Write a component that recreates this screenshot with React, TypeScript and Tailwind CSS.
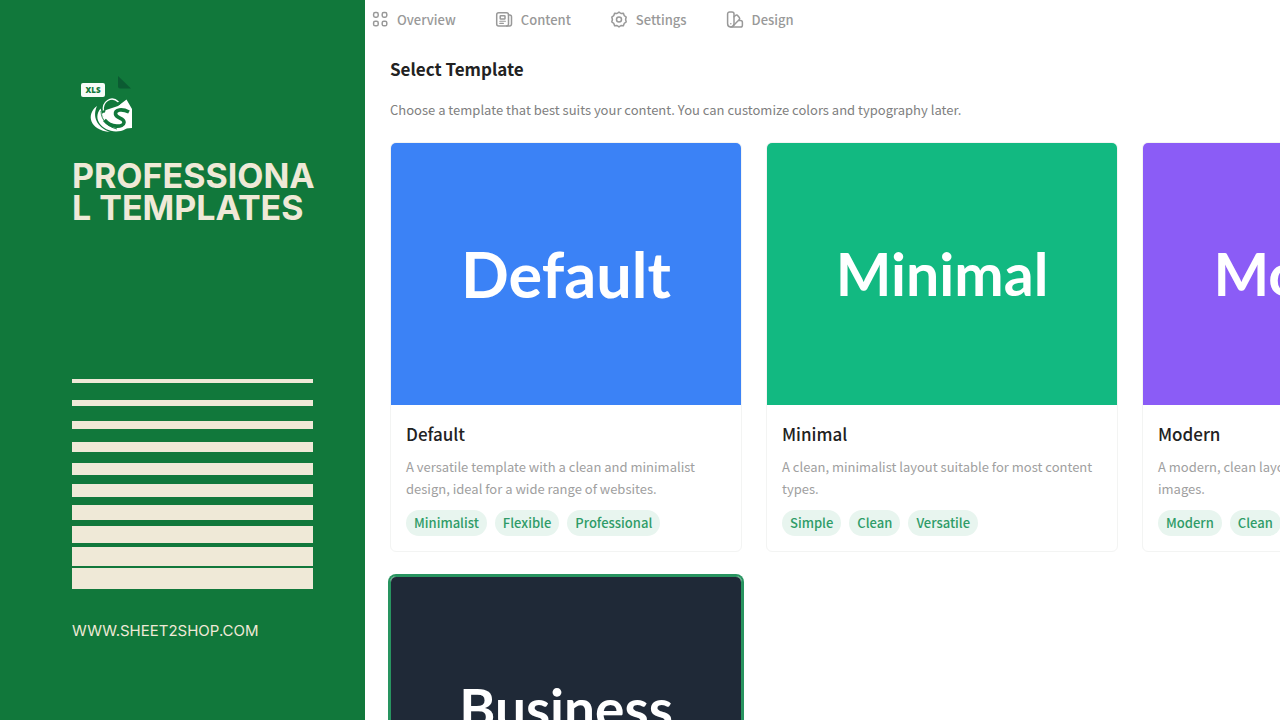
import React from 'react'

type Template = {
    name: string
    description: string
    tags: string[]
    preview: string
    selected?: boolean
}

const templates: Template[] = [
    {
        name: 'Default',
        description: 'A versatile template with a clean and minimalist design, ideal for a wide range of websites.',
        tags: ['Minimalist', 'Flexible', 'Professional'],
        preview: 'bg-[#3b82f6] text-[63px]',
    },
    {
        name: 'Minimal',
        description: 'A clean, minimalist layout suitable for most content types.',
        tags: ['Simple', 'Clean', 'Versatile'],
        preview: 'bg-[#12b981] text-[59px]',
    },
    {
        name: 'Modern',
        description: 'A modern, clean layout with big typography and images.',
        tags: ['Modern', 'Clean', 'Typography'],
        preview: 'bg-[#8b5cf6] text-[59px]',
    },
    {
        name: 'Business',
        description: 'A professional template for companies and services.',
        tags: ['Business', 'Professional'],
        preview: 'bg-[#1f2937] text-[55px]',
        selected: true,
    },
]

const bars = ['h-[4px]', 'h-[6px]', 'h-[8px]', 'h-[10px]', 'h-[12px]', 'h-[13px]', 'h-[15px]', 'h-[17px]', 'h-[19px]', 'h-[21px]']

const Icon = ({ children }: { children: React.ReactNode }) => (
    <svg className="size-[18px]" viewBox="0 0 18 18" fill="none" stroke="currentColor" strokeWidth="1.5" strokeLinecap="round" strokeLinejoin="round" aria-hidden="true">
        {children}
    </svg>
)

const navItems = [
    {
        label: 'Overview',
        icon: (
            <Icon>
                <rect x="2.6" y="1.6" width="4.6" height="4.6" rx="1.6" />
                <rect x="11.2" y="1.6" width="4.6" height="4.6" rx="1.6" />
                <rect x="2.6" y="10.2" width="4.6" height="4.6" rx="1.6" />
                <rect x="11.2" y="10.2" width="4.6" height="4.6" rx="1.6" />
            </Icon>
        ),
    },
    {
        label: 'Content',
        icon: (
            <Icon>
                <rect x="1.7" y="1.7" width="11.8" height="13.2" rx="2" />
                <path d="M13.5 3.9h1.2a1.8 1.8 0 0 1 1.8 1.8v7.4a1.8 1.8 0 0 1-1.8 1.8h-3" />
                <rect x="5.2" y="4.700" width="4.8" height="3.4" rx=".6" />
                <path d="M4.8 10.3h5.6M4.8 12.4h3.6" strokeWidth="1.1" />
            </Icon>
        ),
    },
    {
        label: 'Settings',
        icon: (
            <Icon>
                <path d="M9 1.100 11 2.500l2.400-.2.8 2.300 2 1.400-.6 2.500.6 2.500-2 1.400-.8 2.300-2.400-.2L9 15.900 7 14.500l-2.400.2-.8-2.300-2-1.400.6-2.500L1.800 6l2-1.400.8-2.300 2.400.2Z" />
                <circle cx="9" cy="8.5" r="2.500" />
            </Icon>
        ),
    },
    {
        label: 'Design',
        icon: (
            <Icon>
                <path d="M1.600 3a2 2 0 0 1 2-2h2.400a2 2 0 0 1 2 2v9.800a3.200 3.200 0 0 1-6.400 0Z" />
                <path d="m8 5.800 1.500-1.300a1.600 1.600 0 0 1 2.300.2l1.500 1.800a1.600 1.600 0 0 1-.2 2.200L6.800 15.200" />
                <path d="M12.800 9.600h1.800a1.800 1.800 0 0 1 1.800 1.800v2.800a1.800 1.800 0 0 1-1.800 1.800H4.800" />
                <path d="M4.800 12.800h.01" />
            </Icon>
        ),
    },
]

const Logo = () => (
    <svg className="h-[60px] w-[60px]" viewBox="0 0 60 60" role="img" aria-label="Sheet2Shop">
        <path d="M46 3v10.500a2 2 0 0 0 2 2h11Z" fill="#0b5b32" />
        <rect x="9" y="10" width="24" height="14" rx="2" fill="#f7fcf8" />
        <text x="21" y="20" textAnchor="middle" fontSize="8" fontWeight="800" fill="#11783b" fontFamily="Open Sans, sans-serif">XLS</text>
        {/* shopping tag */}
        <path d="M30 41 34 37 46 33 54.500 26.500 60 36V55L48 56 34 50Z" fill="#fff" />
        <path d="M31.500 38C30 29 39 22 46.500 29" fill="none" stroke="#fff" strokeWidth="1.300" />
        {/* swooshes */}
        <path d="M25 33C14 41 17 57 38 59 25 54 20 44 25 33Z" fill="#fff" />
        <path d="M28.500 35.500C20 46 30 58 44 58.500 51 58.500 57 55 58 50L44 51Q35 50 31 43Z" fill="#fff" />
        <path d="M57 39C50 35.500 43 36.500 43.500 41c.5 4.500 9 4 8.500 8.500-.5 5-13 5.500-19.500-2.500" fill="none" stroke="#11783b" strokeWidth="3.600" />
        <path d="M29 38c0 9 7 16 16 18" fill="none" stroke="#11783b" strokeWidth=".9" />
        <circle cx="32" cy="38.500" r="1.200" fill="#11783b" />
        <circle cx="47" cy="30.500" r="1.200" fill="#11783b" />
    </svg>
)

const TemplateCard = ({ template }: { template: Template }) => (
    <article className={template.selected ? 'rounded-md border border-[#289460] ring-2 ring-[#289460]' : 'rounded-md border border-[#f3f4f3]'}>
        <div className={`flex h-[262px] items-center justify-center rounded-t-[5px] font-[Lato,sans-serif] font-bold text-white ${template.preview}`}>
            {template.name}
        </div>
        <div className="p-[15px]">
            <h2 className="text-[17px] leading-7 font-medium text-[#222]">{template.name}</h2>
            <p className="mt-2 h-[44px] text-[13px] leading-[22px] text-[#a0a0a0]">{template.description}</p>
            <ul className="mt-2.5 flex gap-2">
                {template.tags.map((tag) => (
                    <li key={tag} className="rounded-full bg-[#e8f5ef] px-2 text-[13px] leading-[26px] font-medium text-[#2f9c68]">
                        {tag}
                    </li>
                ))}
            </ul>
        </div>
    </article>
)

const App = () => {
    return (
        <div className="flex h-screen overflow-hidden bg-white font-['Noto_Sans_CJK_SC',sans-serif]">
            <aside className="w-[365px] shrink-0 bg-[#11783b] px-[72px] pt-[73px] text-[#efe9d7]">
                <Logo />
                <h1 className="mt-[27px] font-[Inter,sans-serif] text-[34px] leading-8 font-bold whitespace-nowrap">
                    PROFESSIONA
                    <br />
                    L TEMPLATES
                </h1>
                <div className="mt-[155px] w-[241px]">
                    {bars.map((height) => (
                        <div key={height} className="h-[21px]">
                            <div className={`bg-[#efe9d7] ${height}`} />
                        </div>
                    ))}
                </div>
                <a href="#" className="mt-[32px] block font-[Inter,sans-serif] text-[15px] leading-5">WWW.SHEET2SHOP.COM</a>
            </aside>
            <main className="min-w-0 flex-1 overflow-hidden">
                <nav className="flex h-10 items-center gap-[39px] pl-1.5">
                    {navItems.map((item) => (
                        <a key={item.label} href="#" className="flex items-center gap-2 text-[13px] leading-5 font-medium text-[#999]">
                            {item.icon}
                            {item.label}
                        </a>
                    ))}
                </nav>
                <section className="pt-[15px] pl-[25px]">
                    <h2 className="text-[17px] leading-7 font-bold text-[#222]">Select Template</h2>
                    <p className="mt-[15px] text-[13px] leading-6 text-[#808080]">
                        Choose a template that best suits your content. You can customize colors and typography later.
                    </p>
                    <div className="mt-5 grid grid-cols-[repeat(3,352px)] gap-6">
                        {templates.map((template) => (
                            <TemplateCard key={template.name} template={template} />
                        ))}
                    </div>
                </section>
            </main>
        </div>
    )
}

export default App
